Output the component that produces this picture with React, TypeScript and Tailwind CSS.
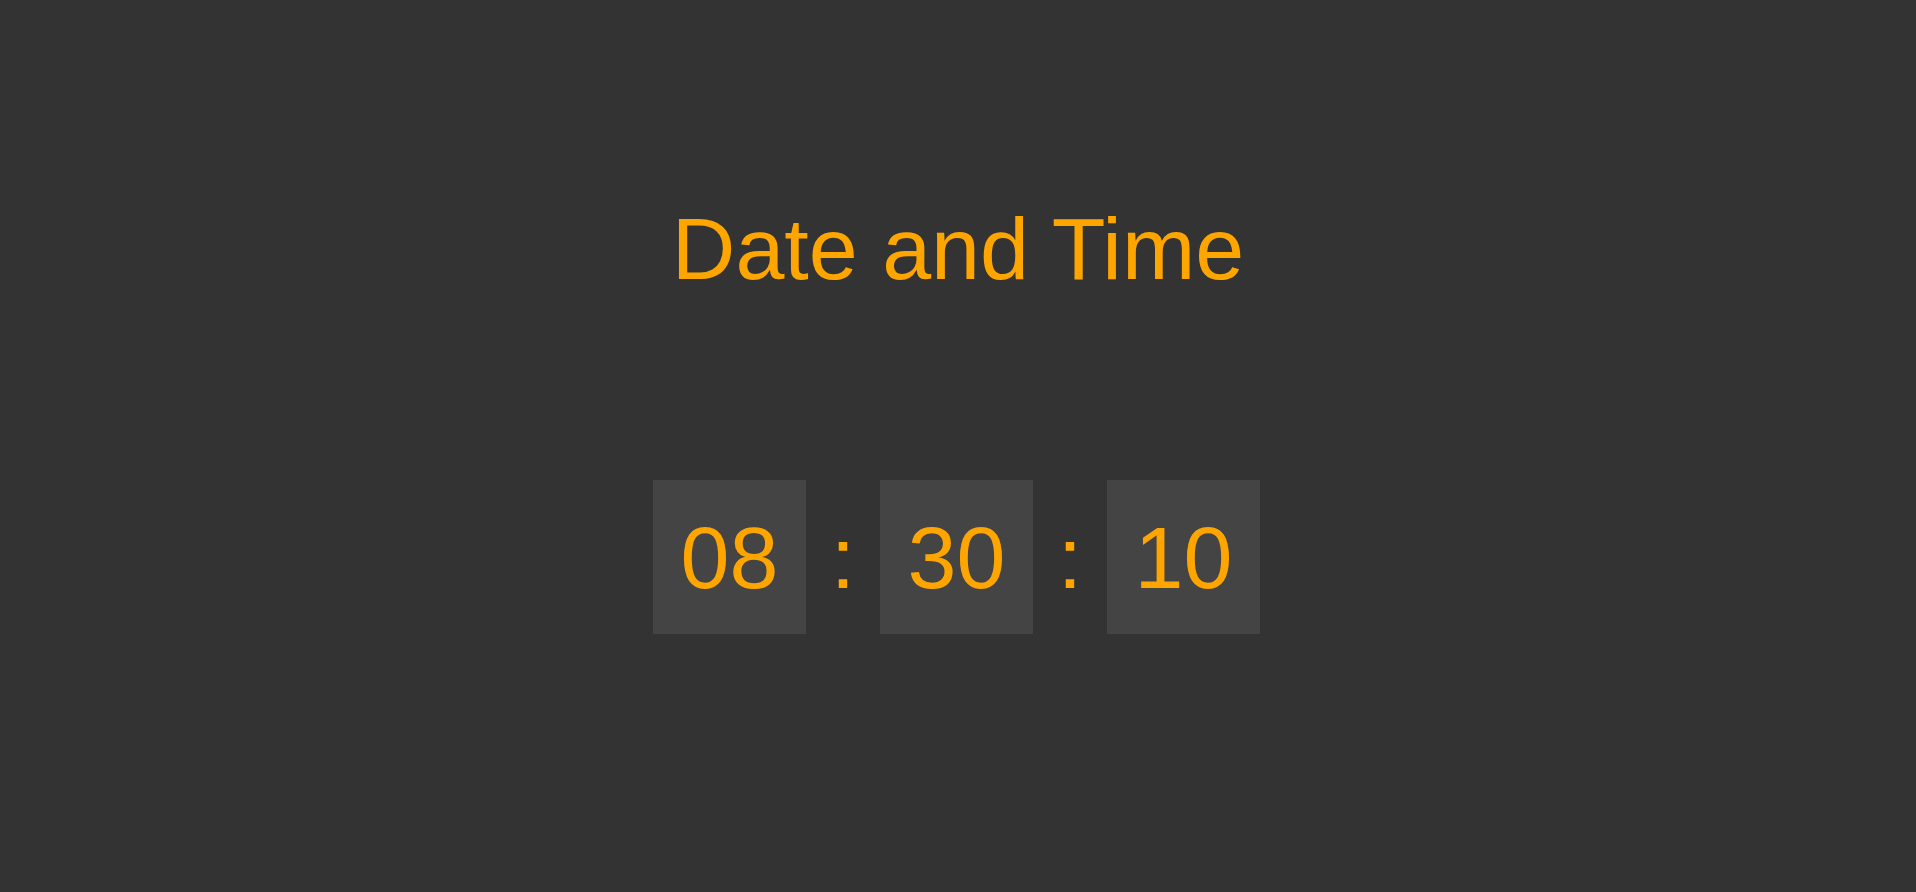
export default function App() {
    const parts = ['08', '30', '10']

    return (
        <div className="min-h-[892px] w-full bg-[#333333] flex flex-col items-center pt-[198px]" style={{fontFamily: '"Liberation Sans", Arial, sans-serif'}}>
            <h1 className="text-[88px] leading-[101px] text-[#ffa500] font-normal">Date and Time</h1>

            <div className="mt-[181px] pr-[3px] flex items-center text-[#ffa500]">
                {parts.map((p, i) => (
                    <div key={i} className="flex items-center">
                        {i > 0 && (
                            <span className="w-[74px] text-center text-[88px] leading-[101px]">:</span>
                        )}
                        <div className="w-[153px] h-[154px] bg-[#444444] flex items-center justify-center text-[88px] leading-[101px]">
                            {p}
                        </div>
                    </div>
                ))}
            </div>
        </div>
    );
}
